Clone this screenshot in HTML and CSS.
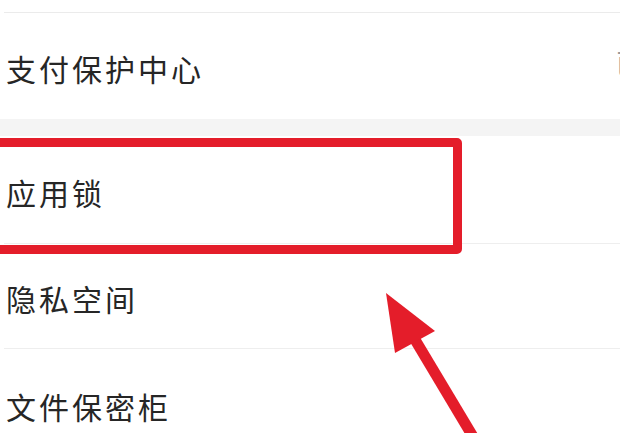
FILE: index.html
```html
<!DOCTYPE html>
<html lang="zh-CN">
<head>
  <meta charset="UTF-8" />
  <title>安全设置</title>
  <meta name="viewport" content="width=device-width, initial-scale=1.0">
  <link rel="stylesheet" href="styles.css">
</head>
<body>

  <div class="screen">
    <div class="list-top"></div>

    <div class="list">
      <div class="row row-first">
        <span class="label">支付保护中心</span>
        <span class="value">已开启</span>
      </div>
    </div>

    <div class="gap"></div>

    <div class="list">
      <div class="row row-lock">
        <span class="label">应用锁</span>
      </div>
      <div class="row row-private">
        <span class="label">隐私空间</span>
      </div>
      <div class="row row-files">
        <span class="label">文件保密柜</span>
      </div>
    </div>

    <!-- annotation overlay -->
    <div class="highlight"></div>
    <svg class="arrow" width="620" height="433" viewBox="0 0 620 433">
      <line x1="414" y1="338" x2="478" y2="445" stroke="#e41d2a" stroke-width="11" />
      <polygon points="386,293 395,353 435,331" fill="#e41d2a" />
    </svg>
  </div>

</body>
</html>
```

FILE: styles.css
```css
html, body {
  margin: 0;
  padding: 0;
  background: #fff;
  overflow: hidden;
}
body {
  font-family: "Noto Sans CJK SC", "Noto Sans", sans-serif;
  color: #262626;
}
.screen {
  position: relative;
  width: 620px;
  height: 433px;
  overflow: hidden;
}
.list-top {
  height: 12px;
  margin-left: 4px;
  border-bottom: 1px solid #ebebeb;
}
.list {
  width: 720px;
  padding-left: 4px;
}
.row {
  display: flex;
  align-items: center;
  justify-content: space-between;
  padding: 4px 20px 0 2px;
  border-bottom: 1px solid #eeeeee;
  box-sizing: border-box;
}
.row:last-child {
  border-bottom: none;
}
.label {
  font-size: 30px;
  letter-spacing: 3px;
}
.value {
  font-size: 27px;
  letter-spacing: 2.5px;
  color: #999;
  margin-bottom: 12px;
}
.row-first {
  height: 106px;
}
.row-lock {
  height: 108px;
}
.row-private {
  height: 105px;
}
.row-files {
  height: 110px;
}
.gap {
  height: 17px;
  background: #f4f4f4;
}

/* red annotation box + arrow */
.highlight {
  position: absolute;
  left: -12px;
  top: 138px;
  width: 474px;
  height: 116px;
  box-sizing: border-box;
  border: 9px solid #e41d2a;
  border-radius: 5px;
}
.arrow {
  position: absolute;
  left: 0;
  top: 0;
}
```
